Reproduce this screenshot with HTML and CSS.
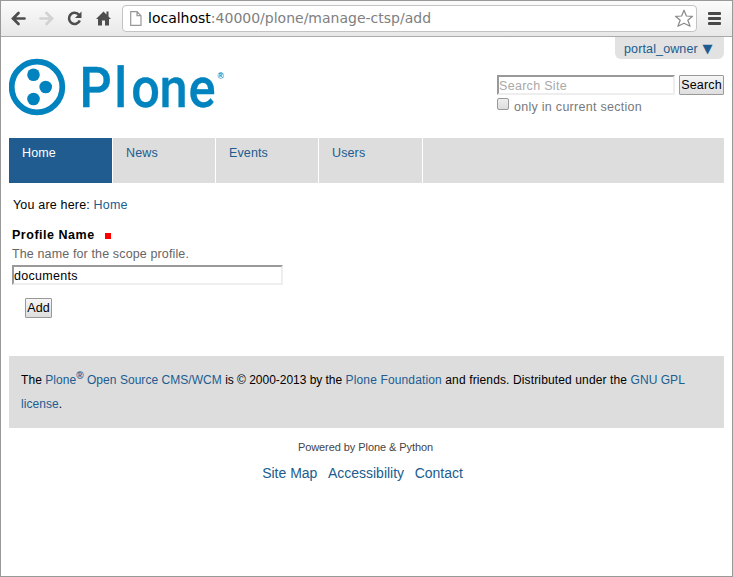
FILE: index.html
```html
<!DOCTYPE html>
<html lang="en">
<head>
<meta charset="utf-8">
<title>Add profile</title>
<link rel="stylesheet" href="styles.css">
</head>
<body>
<div class="window">
  <div class="toolbar">
    <svg class="nav-icons" width="121" height="35" viewBox="1 1 121 35">
      <path d="M24.500 18.500H13.500M18.500 13l-5.500 5.500 5.500 5.500" fill="none" stroke="#4d4d4d" stroke-width="2.700" stroke-linecap="round"/>
      <path d="M40.500 18.500H51.500M46.500 13l5.500 5.500-5.500 5.500" fill="none" stroke="#d2d2d2" stroke-width="2.700" stroke-linecap="round"/>
      <path d="M79 14.800A5.600 5.600 0 1 0 79.800 20.500" fill="none" stroke="#4d4d4d" stroke-width="2.600"/>
      <path d="M81.500 11.500v6.500h-6.500z" fill="#4d4d4d"/>
      <path d="M96 19l7.500-7.500 3 3v-3h2v5l2.500 2.500h-2v6.500h-4v-5h-3v5h-4v-6.500z" fill="#4d4d4d"/>
    </svg>
    <div class="address">
      <svg class="page-icon" width="12" height="15" viewBox="0 0 12 15"><path d="M.7.700h6.300l4 4v9.600H.700zM7 .7v4h4" fill="#fff" stroke="#999" stroke-width="1.200"/></svg>
      <span class="url"><b>localhost</b>:40000/plone/manage-ctsp/add</span>
      <svg class="star" width="20" height="19" viewBox="0 0 20 19"><path d="M10 1.200l2.400 5.800 6.100.3-4.700 3.900 2.300 6L10 14.200l-6.100 3 2.300-6L1.500 7.300l6.100-.3z" fill="#fff" stroke="#888" stroke-width="1.200" stroke-linejoin="round"/></svg>
    </div>
    <div class="menu"><i></i><i></i><i></i></div>
  </div>

  <div class="page">
    <header class="header">
      <svg class="logo" width="218" height="80" viewBox="0 -10 218 80">
        <circle cx="28" cy="28" r="25.300" fill="none" stroke="#0083be" stroke-width="5.800"/>
        <circle cx="24.500" cy="15.800" r="6.300"/><circle cx="36.700" cy="28" r="6.300"/><circle cx="24.500" cy="40" r="6.300"/>
        <text class="word" transform="scale(.92 1)" x="76.500 114.500 133 163.500 195" y="48">Plone</text>
        <text class="mark" x="208.500" y="20">®</text>
      </svg>
      <div class="tools">
        <a class="user">portal_owner <span class="arrow">▼</span></a>
        <div class="search"><div class="field search-field">Search Site</div><button class="search-button">Search</button></div>
        <label class="section"><span class="check"></span>only in current section</label>
      </div>
    </header>
    <nav class="tabs"><a class="selected">Home</a><a>News</a><a>Events</a><a>Users</a></nav>
    <div class="crumbs">You are here: <a>Home</a></div>
    <main class="form">
      <div class="label">Profile Name<span class="required"></span></div>
      <div class="help">The name for the scope profile.</div>
      <div class="field name-field">documents</div>
      <button class="add">Add</button>
    </main>
    <footer class="footer">The <a>Plone<sup>®</sup> Open Source CMS/WCM</a> <span class="years">is © 2000-2013 by the</span> <a>Plone Foundation</a> <span class="terms">and friends. Distributed under the</span> <a>GNU GPL<br>license</a>.</footer>
    <div class="powered">Powered by Plone &amp; Python</div>
    <div class="links"><a>Site Map</a><a>Accessibility</a><a>Contact</a></div>
  </div>
</div>
</body>
</html>
```
FILE: styles.css
```css
* { box-sizing: border-box; }
body { margin: 0; font: 12.500px/20px "Liberation Sans", Arial, sans-serif; letter-spacing: .13px; color: #000; background: #fff; }
a { color: #205c90; }
.window { width: 733px; height: 577px; border: 1px solid #999; overflow: hidden; }
.toolbar { height: 36px; display: flex; align-items: flex-start; border-bottom: 1px solid #aaa; background: linear-gradient(#fbfbfb, #e8e8e8); }
.nav-icons { flex: none; }
.address { width: 575px; height: 27px; margin-top: 4px; border: 1px solid #c3c3c3; border-radius: 4px; background: #fff; display: flex; align-items: center; padding: 0 2px 0 7px; }
.url { margin-left: 6px; flex: 1; font: 14px/24px "DejaVu Sans", sans-serif; letter-spacing: 0; color: #808080; white-space: nowrap; position: relative; top: -1px; }
.url b { font-weight: normal; color: #000; }
.menu { margin: 11px 0 0 11px; width: 13px; display: grid; gap: 2px; }
.menu i { height: 3px; background: #484848; border-radius: 1px; }
.page { padding: 0 8px; }
.header { height: 101px; display: flex; justify-content: space-between; }
.logo { margin-top: 12px; fill: #0083be; letter-spacing: 0; }
.word { font: 500 55px Roboto, sans-serif; stroke: #0083be; stroke-width: .3px; }
.mark { font: bold 8.500px "Liberation Sans", sans-serif; }
.tools { width: 227px; display: flex; flex-direction: column; }
.user { align-self: flex-end; width: 109px; height: 22px; padding-left: 9px; line-height: 24px; background: #e2e2e2; border-radius: 0 0 6px 6px; white-space: nowrap; }
.arrow { font: 13px/12px "DejaVu Sans", sans-serif; margin-left: 1px; }
.search { display: flex; justify-content: space-between; margin-top: 16px; }
.field { height: 20px; border: 2px solid; border-color: #999 #eee #eee #999; line-height: 18px; background: #fff; }
.search-field { width: 178px; color: #a9a9a9; letter-spacing: .3px; }
button { font: 12.500px/18px "Liberation Sans", Arial, sans-serif; letter-spacing: .15px; height: 20px; padding: 0; border: 1px solid #999; border-radius: 1px; color: #000; background: linear-gradient(#f6f6f6, #dedede); }
.search-button { width: 45px; }
.section { display: flex; color: #76797c; line-height: 24px; letter-spacing: .28px; }
.check { width: 12px; height: 12px; margin: 3px 5px 0 0; border: 1px solid #999; border-radius: 2px; background: linear-gradient(#eee, #ddd); }
.tabs { display: flex; height: 45px; background: #ddd; }
.tabs a { width: 103px; padding: 5px 0 0 13px; border-right: 1px solid #fff; }
.tabs a.selected { width: 104px; background: #205c90; color: #fff; }
.tabs a:last-child { width: 104px; }
.crumbs { margin: 12px 0 0 4px; letter-spacing: .18px; }
.form { padding: 10px 3px 0; height: 141px; }
.label { font-weight: bold; display: flex; align-items: center; letter-spacing: .52px; }
.required { width: 6px; height: 6px; margin: 2px 0 0 10px; background: #f00; }
.help { color: #666; line-height: 18px; }
.name-field { width: 271px; margin-top: 2px; letter-spacing: .28px; }
.add { display: block; width: 27px; margin: 13px 0 0 13px; }
.footer { height: 72px; background: #ddd; padding: 12px; font-size: 12px; letter-spacing: .07px; line-height: 24px; white-space: nowrap; }
.footer a { letter-spacing: .04px; }
.footer a + .years + a { letter-spacing: .14px; }
.footer sup { font-size: 10px; line-height: 0; font-weight: bold; vertical-align: 5px; }
.footer .years { letter-spacing: -.03px; }
.footer .terms { letter-spacing: .13px; }
.powered { margin: 9px 2px 0 0; text-align: center; font-size: 11px; letter-spacing: -.07px; color: #444; }
.links { display: flex; justify-content: center; gap: 10.500px; margin: 6px 8px 0 0; font-size: 14px; letter-spacing: 0; }
```
